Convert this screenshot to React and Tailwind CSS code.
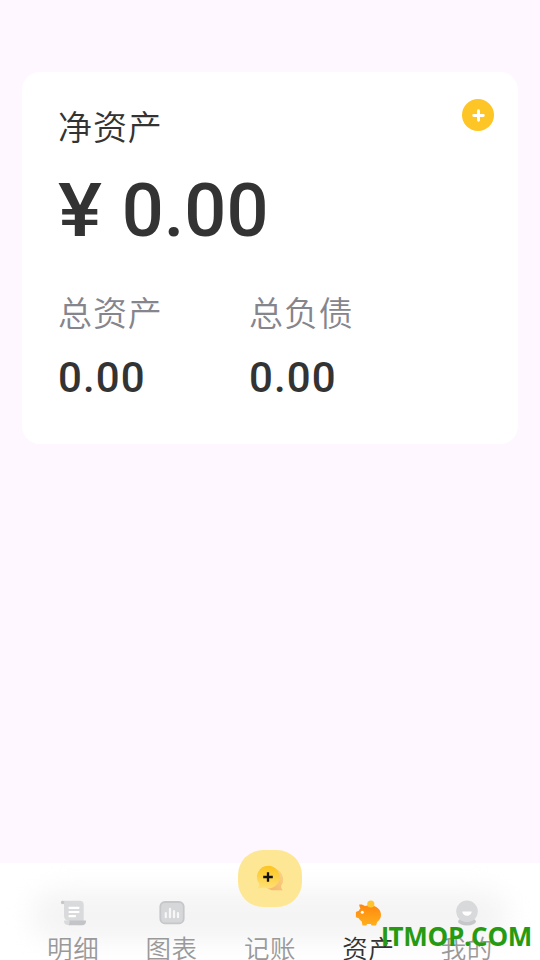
import { useState } from "react";

const DetailIcon = () => (
  <svg className="h-[26px] w-[26px]" viewBox="0 0 26 26" fill="none">
    <path d="M1.500.8h18.200a4 4 0 0 1 4 4V21H9a5 5 0 0 1-5-5V4H2.500Z" fill="#d9dadc" />
    <circle cx="2.600" cy="2.500" r="1.700" fill="#c6c7ca" />
    <path d="M4 16v5a4 4 0 0 0 4 4h11v-4.500H4Z" fill="#d9dadc" />
    <path d="M9.500 20.500h15.800c.6 0 .9.400.8 1-.4 2.300-1.800 3.800-4.100 3.800H8.300c1-.8 1.500-2.800 1.200-4.800Z" fill="#c3c4c8" />
    <path d="M9.500 7.800h9M9.500 12h9M9.500 16.200h5.500" stroke="#fff" strokeWidth="2.200" strokeLinecap="round" />
  </svg>
);

const ChartIcon = () => (
  <svg className="h-[26px] w-[26px]" viewBox="0 0 26 26" fill="none">
    <rect x="1.300" y="2" width="23.400" height="21.300" rx="4.500" fill="#d6d7d9" stroke="#c6c7ca" strokeWidth="1.800" />
    <path d="M6.800 13v4.200M11 8.800v8.400M15 11v6.200M19 13v4.200" stroke="#f7f7f8" strokeWidth="2.200" strokeLinecap="round" />
  </svg>
);

const PiggyIcon = () => (
  <svg className="h-[26px] w-[26px]" viewBox="0 0 26 26" fill="none">
    <defs>
      <linearGradient id="pig" x1="13" y1="4" x2="13" y2="26" gradientUnits="userSpaceOnUse">
        <stop stopColor="#ff860f" />
        <stop offset="1" stopColor="#ffb01c" />
      </linearGradient>
    </defs>
    <path
      d="M4.200 4.500c2.300-.4 4.300.2 5.800 1.500 1.500-.5 3-.6 5-.6 6.500 0 11 3.900 11 9.400 0 3.200-1.500 5.500-3.800 7.300L21 25.600h-4.400l-.8-1.600h-3.700l-.8 1.600H7.500L6.700 21.500c-1.200-.9-2.300-1.900-2.900-3.200L.9 17.200V12l2.900-1.300c.5-.9 1-1.600 1.600-2.200C4.600 7.300 4.200 5.900 4.200 4.500Z"
      fill="url(#pig)"
    />
    <circle cx="7.300" cy="12.200" r="1.500" fill="#fff" />
    <path d="M11.300 6.300c2.800-.9 5.900-.9 8.600.3v2.200c-2.800-1.100-5.800-1.100-8.600 0Z" fill="#ff8f12" />
    <circle cx="15.800" cy="4" r="3.600" fill="#ffc531" />
  </svg>
);

const MineIcon = () => (
  <svg className="h-[26px] w-[26px]" viewBox="0 0 26 26" fill="none">
    <ellipse cx="13" cy="21.500" rx="9" ry="4" fill="#c6c7cb" />
    <circle cx="13" cy="11.300" r="10.800" fill="#d8d9db" />
    <path d="M8.300 11.500h9.400a4.700 4.300 0 0 1-9.400 0Z" fill="#fff" />
  </svg>
);

const RecordIcon = () => (
  <svg className="h-7 w-7" viewBox="0 0 28 28" fill="none">
    <defs>
      <linearGradient id="front" x1="13" y1="1" x2="11" y2="25" gradientUnits="userSpaceOnUse">
        <stop stopColor="#fcc51f" />
        <stop offset="1" stopColor="#ffe27c" />
      </linearGradient>
      <linearGradient id="back" x1="27" y1="8" x2="13" y2="26" gradientUnits="userSpaceOnUse">
        <stop stopColor="#f9d385" />
        <stop offset="1" stopColor="#f6b66c" />
      </linearGradient>
    </defs>
    <path d="M17 3.500a11 11 0 0 1 8 17.500c.1 1.800.7 3 1.800 4.300H16A11 11 0 0 1 17 3.500Z" fill="url(#back)" />
    <path d="M12.500.8a11.300 11.300 0 1 1-4.300 21.800L1.500 23.500c1-1.300 1.600-2.500 1.800-4.500A11.300 11.300 0 0 1 12.500.8Z" fill="url(#front)" />
    <path d="M12 7.200v9.600M7.200 12h9.600" stroke="#111" strokeWidth="2.300" />
  </svg>
);

const tabs = [
  { key: "detail", label: "明细", icon: <DetailIcon /> },
  { key: "chart", label: "图表", icon: <ChartIcon /> },
  { key: "record", label: "记账", icon: null },
  { key: "assets", label: "资产", icon: <PiggyIcon /> },
  { key: "mine", label: "我的", icon: <MineIcon /> },
];

const Total = ({ label, value }) => (
  <div className="w-[191px]">
    <div className="text-[34px] leading-[50px] font-[350] tracking-[0.9px] text-[#85858d]">{label}</div>
    <div className="mt-[14px] font-[Roboto] text-[42px] leading-[50px] font-medium tracking-[1.100px] text-[#333]">
      {value}
    </div>
  </div>
);

const App = () => {
  const [active, setActive] = useState("assets");

  return (
    <div className="relative flex h-[960px] w-[540px] flex-col overflow-hidden bg-[#fef7ff] font-['Roboto','Noto_Sans_CJK_SC',sans-serif]">
      <main className="flex-1 px-[22px] pt-[72px]">
        <section className="h-[372px] rounded-[18px] bg-white pt-[27px] pr-[24px] pl-[36px]">
          <div className="flex items-start justify-between">
            <h1 className="mt-[4px] text-[34px] leading-[50px] font-[350] tracking-[0.9px] text-[#333]">净资产</h1>
            <button className="flex h-8 w-8 items-center justify-center rounded-full bg-[#fdc525]">
              <svg className="h-[13px] w-[13px]" viewBox="0 0 13 13" stroke="#fff" strokeWidth="2.900" strokeLinecap="round">
                <path d="M6.500 1.700v9.600M1.700 6.500h9.600" />
              </svg>
            </button>
          </div>
          <div className="mt-[15px] flex font-[Roboto] text-[74px] leading-[86px] font-medium whitespace-pre text-[#333]">
            <span className="mr-[6px] origin-left scale-x-[1.120]">¥</span>
            <span> 0.00</span>
          </div>
          <div className="mt-[35px] flex">
            <Total label="总资产" value="0.00" />
            <Total label="总负债" value="0.00" />
          </div>
        </section>
      </main>

      <nav className="relative h-[97px] bg-white">
        <div className="absolute top-[28px] right-[32px] left-[32px] h-[50px] rounded-[24px] bg-[#f4f4f4] blur-[13px]" />
        <div className="relative flex h-full px-[24px]">
          {tabs.map((tab) => (
            <button
              key={tab.key}
              onClick={() => setActive(tab.key)}
              className="flex flex-1 flex-col items-center justify-start pt-[37px]"
            >
              <span className="flex h-[26px] shrink-0 items-center">{tab.icon}</span>
              <span
                className={`mt-[4px] shrink-0 text-[25.500px] leading-[38px] font-[350] tracking-[0.6px] whitespace-nowrap ${
                  active === tab.key ? "text-[#333]" : "text-[#999]"
                }`}
              >
                {tab.label}
              </span>
            </button>
          ))}
        </div>
        <button className="absolute -top-[13px] left-[238px] flex h-[57px] w-16 items-center justify-center rounded-[25px] bg-[#fee794]">
          <RecordIcon />
        </button>
      </nav>

      <div className="absolute right-[8px] bottom-[5px] font-['Open_Sans'] text-[26px] leading-[35px] font-bold tracking-[-0.3px] text-[#269b12]">
        <span className="font-[Roboto]">I</span>TMOP.COM
      </div>
    </div>
  );
};

export default App;
